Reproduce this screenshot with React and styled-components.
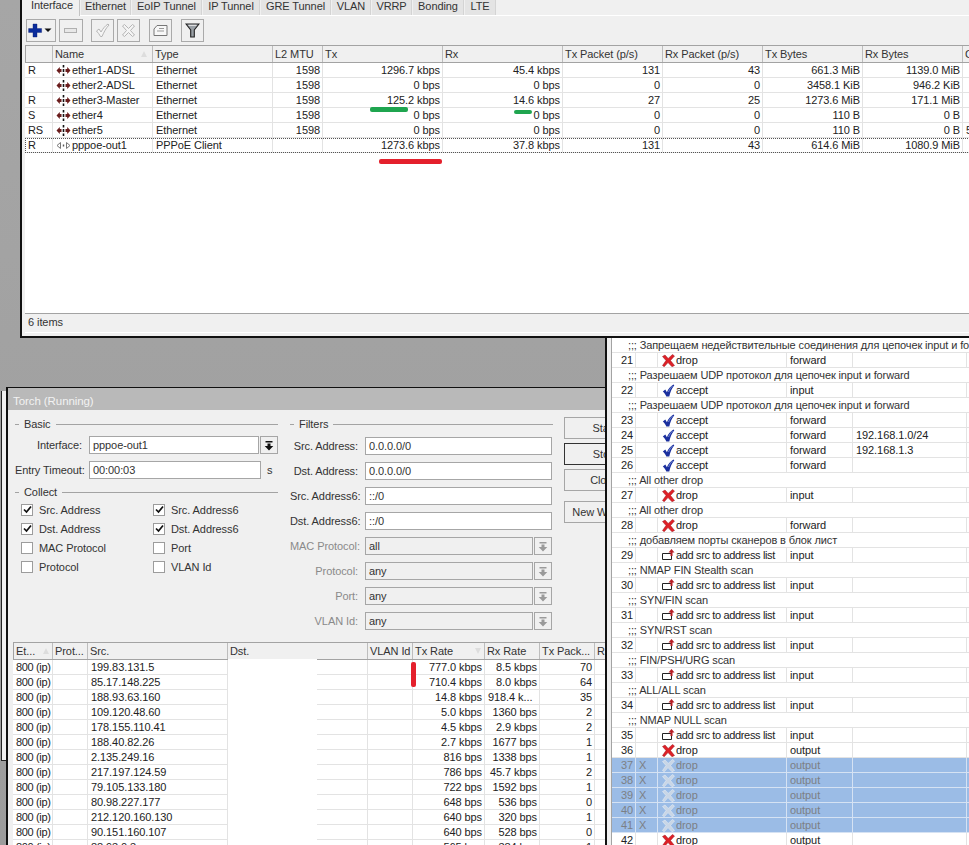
import React from 'react';
import styled, { createGlobalStyle } from 'styled-components';

const Global = createGlobalStyle`
  html, body { margin: 0; padding: 0; background: #a0a0a0; }
  * { box-sizing: border-box; }
  body { font-family: "Liberation Sans", Arial, sans-serif; font-size: 11px; color: #222; letter-spacing: -0.08px; }
`;

const Desktop = styled.div`
  position: relative; width: 969px; height: 845px; overflow: hidden;
  background: linear-gradient(#a6a6a6, #9c9c9c);
`;
const MainWindow = styled.section`
  position: absolute; left: 20px; top: 0; width: 1000px; height: 338px; z-index: 4;
  background: #f0f0f0; border-left: 2px solid #111; border-bottom: 2px solid #111;
  padding: 0 0 0 3px; display: flex; flex-direction: column;
`;
const BackWindow = styled.div`
  position: absolute; left: 1px; top: 391px; width: 20px; height: 370px; z-index: 1;
  background: #f0f0f0; border-left: 1px solid #222; border-bottom: 1px solid #222;
`;
const TorchWindow = styled.section`
  position: absolute; left: 6px; top: 387px; width: 660px; height: 500px; z-index: 2;
  background: #f0f0f0; border-left: 2px solid #111; border-top: 1px solid #111;
  display: flex; flex-direction: column;
`;
const FirewallWindow = styled.section`
  position: absolute; left: 605px; top: 337px; width: 420px; height: 520px; z-index: 3;
  background: #f0f0f0; border-left: 2px solid #111; padding: 1px 0 0 4px;
`;

/* Tabs & toolbar */
const TabStrip = styled.div`
  height: 16px; display: flex; gap: 1px; border-bottom: 1px solid #fff; flex: none;
`;
const Tab = styled.div`
  width: ${p => p.$w}px; height: ${p => (p.$active ? 16 : 15)}px; flex: none;
  background: ${p => (p.$active ? '#f0f0f0' : '#e4e4e4')};
  border-right: 1px solid ${p => (p.$active ? '#c4c4c4' : '#d4d4d4')};
  line-height: ${p => (p.$active ? 10 : 12)}px; text-align: center; font-size: 11px; color: #333;
  position: relative; z-index: 1;
`;
const Toolbar = styled.div`
  height: 29px; flex: none; display: flex; align-items: flex-start; padding: 3px 0 0 1px;
`;
const ToolButton = styled.button`
  width: ${p => p.$w || 23}px; height: 23px; padding: 0; margin-left: ${p => p.$gap || 0}px;
  background: #f0f0f0; border: 1px solid #aaa; display: flex; align-items: center; justify-content: center;
`;

/* Tables */
const HeaderRow = styled.div`
  display: grid; grid-template-columns: ${p => p.$cols}; height: 18px; flex: none;
  background: #f0f0f0; border-top: 1px solid #a3a3a3; border-bottom: 1px solid #a3a3a3;
`;
const HeaderCell = styled.div`
  position: relative; border-right: 1px solid #bdbdbd; padding: 0 2px; line-height: 17px;
  white-space: nowrap; overflow: hidden; color: #333;
  &:first-child { border-left: 1px solid #a3a3a3; }
`;
const SortMark = styled.span`
  position: absolute; right: ${p => p.$r}px; top: 5px; width: 0; height: 0;
  border-left: 3px solid transparent; border-right: 3px solid transparent;
  ${p => (p.$down ? 'border-top: 6px solid #ddd;' : 'border-bottom: 6px solid #ddd;')}
`;
const ListBody = styled.div`
  background: #fff; flex: 1; overflow: hidden; min-height: 0;
`;
const DataRow = styled.div`
  display: grid; grid-template-columns: ${p => p.$cols}; height: 15px;
  border-bottom: 1px solid ${p => (p.$selected ? '#d5e2f3' : '#e3e3e3')};
  background: ${p => (p.$selected ? '#9bbce6' : 'transparent')};
  color: ${p => (p.$selected ? '#7b7f85' : '#222')};
  ${p => p.$focus && 'outline: 1px dotted #555; outline-offset: -1px;'}
`;
const CommentRow = styled.div`
  height: 15px; border-bottom: 1px solid #e3e3e3; padding-left: 16px; line-height: 14px; white-space: nowrap;
  color: #333; letter-spacing: -0.12px;
`;
const Cell = styled.div`
  border-right: 1px solid ${p => (p.$selected ? '#d5e2f3' : '#e3e3e3')};
  padding: 0 ${p => (p.$right ? 2 : 3)}px; line-height: 14px; white-space: nowrap; overflow: hidden;
  text-align: ${p => (p.$right ? 'right' : 'left')};
  display: ${p => (p.$icon ? 'flex' : 'block')}; align-items: center; gap: 1px;
  ${p => p.$tight && 'letter-spacing: -0.35px;'}
  ${p => p.$inset && 'padding-left: 4px;'}
`;
const Orange = styled.span` color: #c98a1a; `;
const StatusBar = styled.div`
  height: 20px; flex: none; border-top: 1px solid #a3a3a3; padding: 0 3px; line-height: 16px;
  background: #f0f0f0; color: #333; border-bottom: 1px solid #fff; margin-bottom: 3px;
`;
const Strike = styled.div`
  position: absolute; z-index: 9; border-radius: 2px;
  left: ${p => p.$x}px; top: ${p => p.$y}px; width: ${p => p.$w}px; height: ${p => p.$h}px;
  background: ${p => (p.$green ? '#1fa54f' : '#e4202c')};
`;

/* Torch */
const TitleBar = styled.div`
  height: 22px; flex: none; background: #b9b9b9; color: #f2f2f2; padding-left: 5px; line-height: 27px; font-size: 11.5px;
`;
const TorchForm = styled.div`
  height: 232px; flex: none; display: flex; padding: 7px 0 0 7px;
`;
const LeftColumn = styled.div` width: 263px; flex: none; display: flex; flex-direction: column; `;
const FilterColumn = styled.div` width: 263px; margin-left: 12px; flex: none; display: flex; flex-direction: column; `;
const Legend = styled.div`
  height: 14px; display: flex; align-items: center; gap: 5px; margin-bottom: ${p => p.$mb}px; margin-top: ${p => p.$mt || 0}px; color: #333;
  &::before { content: ''; width: 4px; height: 1px; background: #a3a3a3; }
  &::after { content: ''; flex: 1; height: 1px; background: #a3a3a3; }
`;
const Field = styled.div`
  display: grid; grid-template-columns: ${p => p.$label}px 1fr; column-gap: ${p => p.$gap}px; height: 18px; margin-bottom: 7px;
  align-items: center;
`;
const FieldLabel = styled.label`
  text-align: right; white-space: nowrap; color: ${p => (p.$off ? '#8a8a8a' : '#333')}; font-size: 11px;
`;
const FieldControl = styled.div` display: flex; gap: 1px; align-items: center; height: 18px; padding-right: ${p => p.$pr || 0}px; `;
const ValueBox = styled.div`
  flex: 1; height: 18px; line-height: 16px; padding: 0 3px; border: 1px solid #a6a6a6;
  background: ${p => (p.$off ? '#f0f0f0' : '#fff')}; color: #333; white-space: nowrap; overflow: hidden;
`;
const DropButton = styled.div`
  width: 18px; height: 18px; flex: none; border: 1px solid #a6a6a6; background: #f0f0f0;
  display: flex; align-items: center; justify-content: center;
`;
const Unit = styled.span` margin-left: 5px; color: #333; width: 11px; flex: none; `;
const CheckGrid = styled.div`
  display: grid; grid-template-columns: 132px 1fr; grid-auto-rows: 19px; padding: 0 0 0 6px;
`;
const CheckRow = styled.div` display: flex; align-items: center; gap: 6px; color: #333; `;
const Box = styled.span`
  width: 12px; height: 12px; border: 1px solid #9c9c9c; background: #fff; display: flex; align-items: center; justify-content: center; flex: none;
`;
const ActionColumn = styled.div` width: 80px; margin-left: 11px; display: flex; flex-direction: column; flex: none; `;
const ActionButton = styled.div`
  height: 22px; flex: none; border: 1px solid ${p => (p.$primary ? '#333' : '#a6a6a6')}; background: #f0f0f0;
  text-align: center; line-height: 20px; margin-bottom: ${p => p.$mb}px; color: #333;
`;
const TorchTable = styled.div` padding-left: 5px; flex: 1; display: flex; flex-direction: column; min-height: 0; position: relative; `;
const BlankPatch = styled.div`
  position: absolute; left: 220px; top: 17px; width: 89px; height: 200px; background: #fff;
`;
const FirewallList = styled.div`
  background: #fff; border-left: 1px solid #a3a3a3; height: 100%; overflow: hidden;
`;

/* Icons */
const EthIcon = () => (
  <svg width="15" height="11" viewBox="0 0 15 11" style={{ flex: 'none' }}>
    <path d="M.5 5.500 3.800 2v2h1.700v3H3.800v2z" fill="#6a1c1c" /><path d="M14.500 5.500 11.200 2v2H9.500v3h1.700v2z" fill="#6a1c1c" />
    <path d="M7.500 0v2.500M7.500 4v3M7.500 8.500V11" stroke="#111" strokeWidth="1.600" />
  </svg>
);
const PppIcon = () => (
  <svg width="15" height="11" viewBox="0 0 15 11" style={{ flex: 'none' }}>
    <path d="M1 5.500 4.500 2.500v6z" fill="#fff" stroke="#777" /><path d="M14 5.500 10.500 2.500v6z" fill="#fff" stroke="#777" />
    <path d="M7.500 4.500v2" stroke="#555" strokeWidth="1.400" />
  </svg>
);
const DropIcon = ({ off }) => (
  <svg width="10" height="11" viewBox="0 0 10 11" style={{ flex: 'none' }}>
    <path d="M1.500 1h7v1.500h-7zM3.500 3.500h3V6H9.300L5 10.500.7 6h2.800z" fill={off ? '#9a9a9a' : '#111'} />
  </svg>
);
const XIcon = ({ faded }) => (
  <svg width="13" height="13" viewBox="0 0 13 13" style={{ flex: 'none' }}>
    <path d="M.5 2.500 3 1l3.200 3.400L10.500.5 12.500 2 8.500 6.500l4 5L10 12.800 6 8.600 2.200 12.800.5 11.500 4 6.500z"
      fill={faded ? '#c9d6e6' : '#de2027'} stroke={faded ? '#eef2f7' : '#9c1a20'} strokeWidth=".5" />
  </svg>
);
const CheckIcon = () => (
  <svg width="13" height="13" viewBox="0 0 13 13" style={{ flex: 'none' }}>
    <path d="M.8 7.500 3.300 5.600l1.600 2.600C6.300 5 8.500 2.500 11.500.6l.8.6C9.800 4.200 8.300 8 7.300 12.400H4.300C3.500 10.500 2.300 8.800.8 7.500z" fill="#1a2f9e" />
    <path d="M6.500 8C7.500 5.500 9 3.500 10.500 2" stroke="#9fb2ec" strokeWidth=".7" fill="none" />
  </svg>
);
const AddListIcon = () => (
  <svg width="13" height="12" viewBox="0 0 13 12" style={{ flex: 'none' }}>
    <path d="M.5 4.500h9v6h-9z" fill="#fff" stroke="#222" />
    <path d="M8.500 7V3.500H6.500L9.500 0l3 3.500h-2V7z" fill="#b81c22" />
  </svg>
);

const ToolIcons = {
  plus: (
    <svg width="27" height="15" viewBox="0 0 27 15">
      <path d="M5 1h4v4.600h4.600v3.800H9V14H5V9.400H.6V5.600H5z" fill="#0b2c9c" stroke="#0a1f70" strokeWidth=".4" />
      <path d="M16.500 5.500h7l-3.500 3.500z" fill="#111" />
    </svg>
  ),
  minus: (
    <svg width="14" height="8" viewBox="0 0 14 8"><rect x=".5" y="1.500" width="12" height="4" fill="#e8e8e8" stroke="#b0b0b0" /></svg>
  ),
  check: (
    <svg width="15" height="15" viewBox="0 0 15 15">
      <path d="M1.500 8 4 6l2 3C8 5.500 10 3 13 1l1 1C11 5 9 9 7 13.500H5.500C4.500 11.500 3 9.500 1.500 8z" fill="#f5f5f5" stroke="#b5b5b5" />
    </svg>
  ),
  cross: (
    <svg width="15" height="15" viewBox="0 0 15 15">
      <path d="M1.500 3 3.500 1.500l4 4 4-4L13.500 3l-4 4.500 4 4.500-2 1.500-4-4-4 4-2-1.500 4-4.500z" fill="#f5f5f5" stroke="#b5b5b5" />
    </svg>
  ),
  note: (
    <svg width="15" height="13" viewBox="0 0 15 13">
      <path d="M4 1.500h10v10H1V5z" fill="#f8f8f8" stroke="#777" /><path d="M6 4.500h5M4 7h7" stroke="#999" />
    </svg>
  ),
  filter: (
    <svg width="15" height="15" viewBox="0 0 15 15">
      <path d="M1 1h13L9.300 7v7H5.700V7z" fill="#9aa0a6" stroke="#222" strokeWidth="1.100" />
      <path d="M3.500 2.300h8" stroke="#eee" />
    </svg>
  ),
};

/* Data */
const mainCols = '28px 100px 120px 50px 120px 120px 100px 100px 100px 100px 100px';
const mainHead = ['', 'Name', 'Type', 'L2 MTU', 'Tx', 'Rx', 'Tx Packet (p/s)', 'Rx Packet (p/s)', 'Tx Bytes', 'Rx Bytes', 'C'];
const mainRows = [
  ['R', 'ether1-ADSL', 'Ethernet', '1598', '1296.7 kbps', '45.4 kbps', '131', '43', '661.3 MiB', '1139.0 MiB', ''],
  ['', 'ether2-ADSL', 'Ethernet', '1598', '0 bps', '0 bps', '0', '0', '3458.1 KiB', '946.2 KiB', ''],
  ['R', 'ether3-Master', 'Ethernet', '1598', '125.2 kbps', '14.6 kbps', '27', '25', '1273.6 MiB', '171.1 MiB', ''],
  ['S', 'ether4', 'Ethernet', '1598', '0 bps', '0 bps', '0', '0', '110 B', '0 B', ''],
  ['RS', 'ether5', 'Ethernet', '1598', '0 bps', '0 bps', '0', '0', '110 B', '0 B', '5'],
  ['R', 'pppoe-out1', 'PPPoE Client', '', '1273.6 kbps', '37.8 kbps', '131', '43', '614.6 MiB', '1080.9 MiB', ''],
];
const tabs = [['Interface', 55], ['Ethernet', 50], ['EoIP Tunnel', 70], ['IP Tunnel', 57], ['GRE Tunnel', 70], ['VLAN', 39], ['VRRP', 40], ['Bonding', 51], ['LTE', 31]];

const torchCols = '40px 35px 140px 140px 45px 72px 55px 55px 30px';
const torchHead = ['Et...', 'Prot...', 'Src.', 'Dst.', 'VLAN Id', 'Tx Rate', 'Rx Rate', 'Tx Pack...', 'R'];
const torchRows = [
  ['199.83.131.5', '777.0 kbps', '8.5 kbps', '70'],
  ['85.17.148.225', '710.4 kbps', '8.0 kbps', '64'],
  ['188.93.63.160', '14.8 kbps', '918.4 k...', '35'],
  ['109.120.48.60', '5.0 kbps', '1360 bps', '2'],
  ['178.155.110.41', '4.5 kbps', '2.9 kbps', '2'],
  ['188.40.82.26', '2.7 kbps', '1677 bps', '1'],
  ['2.135.249.16', '816 bps', '1338 bps', '1'],
  ['217.197.124.59', '786 bps', '45.7 kbps', '2'],
  ['79.105.133.180', '722 bps', '1592 bps', '1'],
  ['80.98.227.177', '648 bps', '536 bps', '0'],
  ['212.120.160.130', '640 bps', '320 bps', '1'],
  ['90.151.160.107', '640 bps', '528 bps', '0'],
  ['88.93.0.3', '565 bps', '384 bps', '1'],
];

const fwCols = '24px 22px 129px 66px 114px 60px';
const UDP = 'Разрешаем UDP протокол для цепочек input и forward';
const ADD = 'add src to address list';
const fwRows = [
  { c: 'Запрещаем недействительные соединения для цепочек input и forward' },
  { n: 21, a: 'drop', ch: 'forward' },
  { c: UDP }, { n: 22, a: 'accept', ch: 'input' },
  { c: UDP }, { n: 23, a: 'accept', ch: 'forward' },
  { n: 24, a: 'accept', ch: 'forward', s: '192.168.1.0/24' },
  { n: 25, a: 'accept', ch: 'forward', s: '192.168.1.3' },
  { n: 26, a: 'accept', ch: 'forward' },
  { c: 'All other drop' }, { n: 27, a: 'drop', ch: 'input' },
  { c: 'All other drop' }, { n: 28, a: 'drop', ch: 'forward' },
  { c: 'добавляем порты сканеров в блок лист' }, { n: 29, a: ADD, ch: 'input' },
  { c: 'NMAP FIN Stealth scan' }, { n: 30, a: ADD, ch: 'input' },
  { c: 'SYN/FIN scan' }, { n: 31, a: ADD, ch: 'input' },
  { c: 'SYN/RST scan' }, { n: 32, a: ADD, ch: 'input' },
  { c: 'FIN/PSH/URG scan' }, { n: 33, a: ADD, ch: 'input' },
  { c: 'ALL/ALL scan' }, { n: 34, a: ADD, ch: 'input' },
  { c: 'NMAP NULL scan' }, { n: 35, a: ADD, ch: 'input' },
  { n: 36, a: 'drop', ch: 'output', o: '2' },
  { n: 37, a: 'drop', ch: 'output', x: true, o: '4' },
  { n: 38, a: 'drop', ch: 'output', x: true, o: '' },
  { n: 39, a: 'drop', ch: 'output', x: true, o: '' },
  { n: 40, a: 'drop', ch: 'output', x: true, o: '' },
  { n: 41, a: 'drop', ch: 'output', x: true, o: '4' },
  { n: 42, a: 'drop', ch: 'output', o: '2' },
];

const ActionIcon = ({ a, faded }) =>
  a === 'drop' ? <XIcon faded={faded} /> : a === 'accept' ? <CheckIcon /> : <AddListIcon />;

const Check = ({ on, children }) => (
  <CheckRow>
    <Box>
      {on && (
        <svg width="9" height="9" viewBox="0 0 9 9"><path d="M1 4.500 3.500 7 8 1.500" fill="none" stroke="#111" strokeWidth="1.700" /></svg>
      )}
    </Box>
    {children}
  </CheckRow>
);

const filters = [
  ['Src. Address:', '0.0.0.0/0'], ['Dst. Address:', '0.0.0.0/0'],
  ['Src. Address6:', '::/0'], ['Dst. Address6:', '::/0'],
];
const disabledFilters = [['MAC Protocol:', 'all'], ['Protocol:', 'any'], ['Port:', 'any'], ['VLAN Id:', 'any']];

export default function App() {
  return (
    <Desktop>
      <Global />
      <MainWindow>
        <TabStrip>
          {tabs.map(([t, w], i) => <Tab key={t} $w={w} $active={i === 0}>{t}</Tab>)}
        </TabStrip>
        <Toolbar>
          <ToolButton $w={30}>{ToolIcons.plus}</ToolButton>
          <ToolButton $w={24} $gap={3}>{ToolIcons.minus}</ToolButton>
          <ToolButton $gap={8}>{ToolIcons.check}</ToolButton>
          <ToolButton $gap={3}>{ToolIcons.cross}</ToolButton>
          <ToolButton $gap={9}>{ToolIcons.note}</ToolButton>
          <ToolButton $gap={9}>{ToolIcons.filter}</ToolButton>
        </Toolbar>
        <HeaderRow $cols={mainCols}>
          {mainHead.map((h, i) => (
            <HeaderCell key={i}>{h}{i === 1 && <SortMark $r={5} />}</HeaderCell>
          ))}
        </HeaderRow>
        <ListBody>
          {mainRows.map((r, i) => (
            <DataRow key={i} $cols={mainCols} $focus={i === 5}>
              {r.map((v, j) =>
                j === 1 ? (
                  <Cell key={j} $icon>{i === 5 ? <PppIcon /> : <EthIcon />}{v}</Cell>
                ) : (
                  <Cell key={j} $right={j >= 3 && j < 10}>{v}</Cell>
                )
              )}
            </DataRow>
          ))}
        </ListBody>
        <StatusBar>6 items</StatusBar>
      </MainWindow>

      <BackWindow />

      <TorchWindow>
        <TitleBar>Torch (Running)</TitleBar>
        <TorchForm>
          <LeftColumn>
            <Legend $mb={5}>Basic</Legend>
            <Field $label={67} $gap={7}>
              <FieldLabel>Interface:</FieldLabel>
              <FieldControl><ValueBox>pppoe-out1</ValueBox><DropButton><DropIcon /></DropButton></FieldControl>
            </Field>
            <Field $label={67} $gap={7}>
              <FieldLabel>Entry Timeout:</FieldLabel>
              <FieldControl><ValueBox>00:00:03</ValueBox><Unit>s</Unit></FieldControl>
            </Field>
            <Legend $mb={1} $mt={-1}>Collect</Legend>
            <CheckGrid>
              <Check on>Src. Address</Check><Check on>Src. Address6</Check>
              <Check on>Dst. Address</Check><Check on>Dst. Address6</Check>
              <Check>MAC Protocol</Check><Check>Port</Check>
              <Check>Protocol</Check><Check>VLAN Id</Check>
            </CheckGrid>
          </LeftColumn>
          <FilterColumn>
            <Legend $mb={6}>Filters</Legend>
            {filters.map(([l, v]) => (
              <Field key={l} $label={68} $gap={7}>
                <FieldLabel>{l}</FieldLabel>
                <FieldControl $pr={1}><ValueBox>{v}</ValueBox></FieldControl>
              </Field>
            ))}
            {disabledFilters.map(([l, v]) => (
              <Field key={l} $label={68} $gap={7}>
                <FieldLabel $off>{l}</FieldLabel>
                <FieldControl $pr={1}><ValueBox $off>{v}</ValueBox><DropButton><DropIcon off /></DropButton></FieldControl>
              </Field>
            ))}
          </FilterColumn>
          <ActionColumn>
            <ActionButton $mb={4}>Start</ActionButton>
            <ActionButton $mb={4} $primary>Stop</ActionButton>
            <ActionButton $mb={10}>Close</ActionButton>
            <ActionButton $mb={0}>New Window</ActionButton>
          </ActionColumn>
        </TorchForm>
        <TorchTable>
          <HeaderRow $cols={torchCols}>
            {torchHead.map((h, i) => (
              <HeaderCell key={i}>
                {h}
                {i === 0 && <SortMark $r={3} />}
                {i === 5 && <SortMark $r={3} $down />}
              </HeaderCell>
            ))}
          </HeaderRow>
          <ListBody>
            {torchRows.map((r, i) => (
              <DataRow key={i} $cols={torchCols}>
                <Cell $tight>800 (ip)</Cell>
                <Cell />
                <Cell>{r[0]}</Cell>
                <Cell />
                <Cell />
                <Cell $right>{r[1]}</Cell>
                <Cell $right={!r[2].includes('k...')}>{r[2]}</Cell>
                <Cell $right>{r[3]}</Cell>
                <Cell />
              </DataRow>
            ))}
          </ListBody>
          <BlankPatch />
        </TorchTable>
      </TorchWindow>

      <FirewallWindow>
        <FirewallList>
          {fwRows.map((r, i) =>
            r.c ? (
              <CommentRow key={i}>;;; {r.c}</CommentRow>
            ) : (
              <DataRow key={i} $cols={fwCols} $selected={r.x}>
                <Cell $right $selected={r.x}>{r.n}</Cell>
                <Cell $selected={r.x}>{r.x ? 'X' : ''}</Cell>
                <Cell $icon $inset $tight={r.a === ADD} $selected={r.x}><ActionIcon a={r.a} faded={r.x} />{r.a}</Cell>
                <Cell $selected={r.x}>{r.ch}</Cell>
                <Cell $selected={r.x}>{r.s}</Cell>
                <Cell $selected={r.x}><Orange>{r.o}</Orange></Cell>
              </DataRow>
            )
          )}
        </FirewallList>
      </FirewallWindow>

      <Strike $green $x={370} $y={107} $w={38} $h={5} />
      <Strike $green $x={514} $y={110} $w={18} $h={4} />
      <Strike $x={379} $y={159} $w={63} $h={5} />
      <Strike $x={411} $y={662} $w={5} $h={25} />
    </Desktop>
  );
}
